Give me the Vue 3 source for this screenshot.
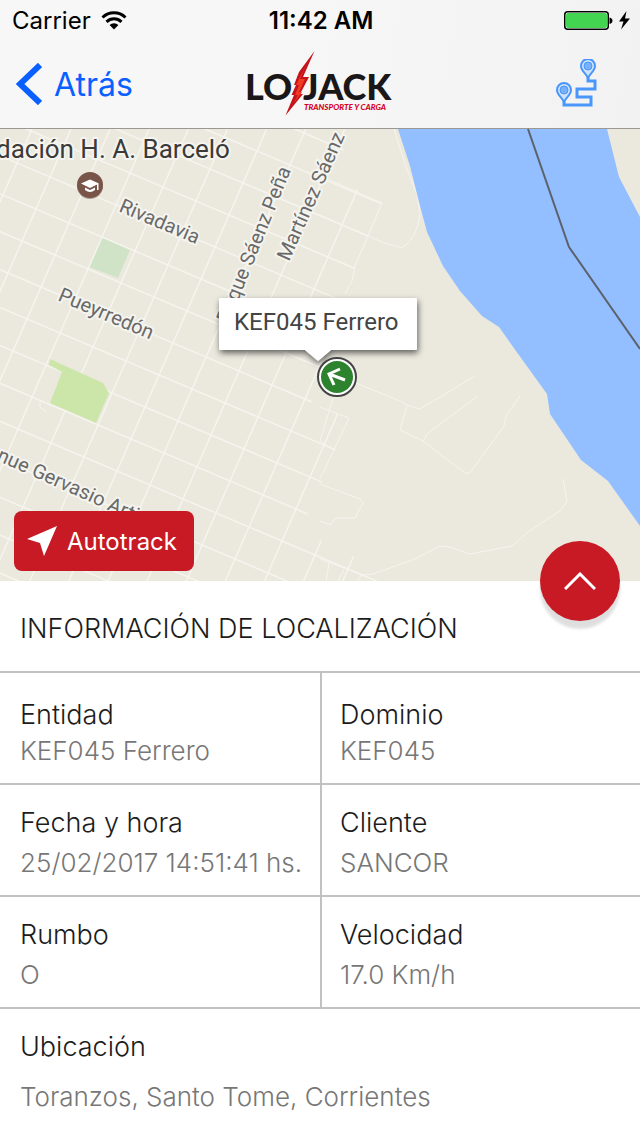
<template>
  <div class="screen">
    <header class="top">
      <div class="status-bar">
        <div class="status-left">
          <span>Carrier</span>
          <svg class="wifi" viewBox="0 0 26 19" aria-hidden="true">
            <path d="M1.5 6.5a16.5 16.5 0 0 1 23 0" />
            <path d="M5.5 10.8a10.8 10.8 0 0 1 15 0" />
            <path class="dot" d="M8.6 14a6.4 6.4 0 0 1 8.8 0L13 18.5z" />
          </svg>
        </div>
        <span class="clock">11:42 AM</span>
        <div class="status-right">
          <svg class="battery" viewBox="0 0 66 20" aria-hidden="true">
            <rect x="0.75" y="1.75" width="43.5" height="17.5" rx="3" fill="#fff" stroke="#000" stroke-width="1.5" />
            <rect x="2" y="3" width="41" height="15" rx="2" fill="#43d551" />
            <path d="M45.5 7.5c4 0.500 4 6 0 6.500z" fill="#000" />
            <path d="M62.500 1L55 11.500h4.500L57 19.500l9-11h-5z" fill="#000" />
          </svg>
        </div>
      </div>

      <nav class="nav-bar">
        <button class="back" type="button">
          <svg viewBox="0 0 26 42" aria-hidden="true">
            <path d="M24 2L4 21L24 40" />
          </svg>
          <span>Atrás</span>
        </button>

        <svg class="logo" viewBox="245 50 154 70" role="img" aria-label="LoJack Transporte y Carga">
          <text class="logo-name" x="245" y="101">LO</text>
          <text class="logo-name" x="303" y="101">JACK</text>
          <path class="bolt-gap" d="M314.500 52L296 79l-3 17h2l-3 8h2l-8 13l17-21h-2l6-15h-4z" />
          <path class="bolt" d="M314.500 52L299 73l-5 13h2l-4.500 10h2.500l-8.500 20.500L303 95h-3l9-17h-6z" />
          <path class="bolt-light" d="M307 64L301 76l-5 10h3l-4 10h3l-5 9l9-12h-3l6-13h-5z" />
          <text class="logo-tag" x="304" y="111">TRANSPORTE Y CARGA</text>
        </svg>

        <button class="route" type="button" aria-label="Recorrido">
          <svg viewBox="556 59 44 50" aria-hidden="true">
            <path class="route-line" d="M588 77v4h7v8h-18v8h14v8h-27v-4" />
            <g v-for="pin in routePins" :key="pin.x" :transform="`translate(${pin.x} ${pin.y})`">
              <path class="pin" d="M0 12C-2 7-7 5-7 0a7 7 0 0 1 14 0C7 5 2 7 0 12z" />
              <circle class="pin-dot" r="4" />
            </g>
          </svg>
        </button>
      </nav>
    </header>

    <main class="content">
      <section class="map">
        <svg class="map-canvas" viewBox="0 0 640 452" preserveAspectRatio="xMidYMid slice">
          <defs>
            <clipPath id="town">
              <path d="M0 0H348L338 50L382 74L355 137L350 165L335 240L310 275L350 290L300 402L380 440V452H0z" />
            </clipPath>
            <filter id="callout-shadow" x="-10%" y="-20%" width="120%" height="150%">
              <feDropShadow dx="1" dy="3" stdDeviation="3" flood-color="#000" flood-opacity="0.6" />
            </filter>
          </defs>

          <path class="park-pale" d="M101 108L130 121L118 149L89 138z" />

          <g clip-path="url(#town)">
            <path v-for="(d, idx) in streets" :key="idx" class="street" :d="d" />
          </g>
          <path v-for="(d, idx) in lanes" :key="`lane-${idx}`" class="lane" :d="d" />

          <path class="park" d="M50 230L103 254L109 264L96 294L50 274L62 243L49 236z" />

          <path class="water" d="M398 0L410 37L419 73L427 103L443 137L460 162L482 187L499 198L516 222L547 265L550 285L581 331L608 352L640 397V88L619 48L607 0z" />
          <path class="border-line" d="M528 0L569 118L640 220" />

          <text class="place" x="-4" y="29">dación H. A. Barceló</text>
          <text
            v-for="label in labels"
            :key="label.text"
            class="label"
            :transform="`translate(${label.x} ${label.y}) rotate(${label.angle})`"
            :text-anchor="label.anchor"
          >{{ label.text }}</text>

          <!-- university marker -->
          <circle cx="90" cy="57" r="13" fill="#6d5049" opacity="0.5" />
          <circle cx="90" cy="56" r="13" fill="#795549" />
          <path d="M81 54.500L90 50.500L99 54.500L90 59zM85 58.500L90 61L95 58.500V61Q90 65 85 61zM97 55h1.500v6H97z" fill="#fff" />

          <!-- vehicle -->
          <path class="callout" filter="url(#callout-shadow)" d="M220 169H416Q417 169 417 170V220Q417 221 416 221H331L318 232L305 221H220Q219 221 219 220V170Q219 169 220 169z" />
          <text class="callout-text" x="234" y="201">KEF045 Ferrero</text>
          <circle cx="337" cy="248" r="19" fill="#fff" stroke="#444" stroke-width="2" />
          <circle cx="337" cy="248" r="16" fill="#2d832d" />
          <path class="heading" d="M345 251L329 245M340 240L329 245L334 256" />
        </svg>

        <button class="autotrack" type="button">
          <svg viewBox="0 0 30 30" aria-hidden="true">
            <path d="M30 0L17 30L13 17L0 13z" />
          </svg>
          <span>Autotrack</span>
        </button>
      </section>

      <section class="panel">
        <button class="toggle" type="button" aria-label="Ver más">
          <svg viewBox="0 0 32 18" aria-hidden="true">
            <path d="M1 17L16 2L31 17" />
          </svg>
        </button>

        <h1 class="panel-title">INFORMACIÓN DE LOCALIZACIÓN</h1>

        <dl class="info">
          <div v-for="item in info" :key="item.label" class="cell" :class="item.kind">
            <dt>{{ item.label }}</dt>
            <dd>{{ item.value }}</dd>
          </div>
        </dl>
      </section>
    </main>
  </div>
</template>

<script setup>
const info = [
  { label: 'Entidad', value: 'KEF045 Ferrero', kind: 'tight' },
  { label: 'Dominio', value: 'KEF045', kind: 'tight' },
  { label: 'Fecha y hora', value: '25/02/2017 14:51:41 hs.' },
  { label: 'Cliente', value: 'SANCOR' },
  { label: 'Rumbo', value: 'O' },
  { label: 'Velocidad', value: '17.0 Km/h' },
  { label: 'Ubicación', value: 'Toranzos, Santo Tome, Corrientes', kind: 'wide' }
]

const routePins = [
  { x: 588, y: 66 },
  { x: 564, y: 90 }
]

const labels = [
  { text: 'Rivadavia', x: 118, y: 82, angle: 23 },
  { text: 'Pueyrredón', x: 57, y: 171, angle: 23 },
  { text: 'Roque Sáenz Peña', x: 291, y: 41, angle: -68, anchor: 'end' },
  { text: 'Martínez Sáenz', x: 289, y: 133, angle: -66 },
  { text: 'nue Gervasio Artigas', x: -4, y: 331, angle: 24 }
]

// Town grid: one block is (33, 14) along a street and (-14, 32) across it
const origin = { x: 131, y: 310 }
const along = { x: 33, y: 14 }
const across = { x: -14, y: 32 }

const line = (x, y, dir, reach) =>
  `M${x - dir.x * reach} ${y - dir.y * reach}L${x + dir.x * reach} ${y + dir.y * reach}`

const streets = []
for (let i = -14; i <= 14; i++) {
  streets.push(line(origin.x + across.x * i, origin.y + across.y * i, along, 20))
  streets.push(line(origin.x + along.x * i, origin.y + along.y * i, across, 20))
}

// Loose roads outside the grid
const lanes = [
  'M394 0L405 35L417 65L420 85Q417 110 402 119L382 113L320 86',
  'M328 50L382 74L355 137L352 152L345 165',
  'M356 254L402 273L407 276L420 280L475 247',
  'M407 276L400 301L423 312L465 344L470 344L504 297L506 287L520 267',
  'M423 312L428 304L478 267',
  'M320 355L360 370L363 374L355 389H335L331 396L320 392',
  'M320 430L363 446L373 445L415 430L440 417L450 418L470 425L512 417L528 403L560 382L567 372L563 350',
  'M329 434L326 452M344 440L338 452M361 446L358 452',
  'M320 278L349 289L320 350M333 269L320 312L333 321',
  'M40 273V278L46 283'
]
</script>

<style>
body {
  margin: 0;
  background: #fff;
}
</style>

<style scoped>
.screen {
  display: flex;
  flex-direction: column;
  min-height: 100vh;
  font-family: Inter, 'Liberation Sans', sans-serif;
  color: #1c1c1c;
}

button {
  border: 0;
  padding: 0;
  background: none;
  font: inherit;
  cursor: pointer;
}

.top {
  background: linear-gradient(100deg, #f7f7f7 40%, #f2f2f2);
  border-bottom: 1px solid #9b9893;
}

.status-bar {
  display: grid;
  grid-template-columns: 1fr auto 1fr;
  align-items: center;
  height: 40px;
  padding: 0 10px 0 12px;
  font-size: 24px;
  color: #000;
}

.status-left {
  display: flex;
  align-items: center;
  gap: 10px;
}

.status-right {
  display: flex;
  justify-content: flex-end;
}

.wifi {
  width: 26px;
  height: 19px;
  fill: none;
  stroke: #000;
  stroke-width: 3;
}

.wifi .dot {
  fill: #000;
  stroke: none;
}

.clock {
  font-weight: 600;
}

.battery {
  width: 66px;
  height: 20px;
}

.nav-bar {
  display: grid;
  grid-template-columns: 1fr auto 1fr;
  align-items: center;
  height: 88px;
  padding: 0 40px 0 16px;
}

.back {
  display: flex;
  align-items: center;
  justify-self: start;
  gap: 12px;
  font-size: 32px;
  color: #0a60ff;
}

.back svg {
  width: 26px;
  height: 42px;
  fill: none;
  stroke: #0a60ff;
  stroke-width: 6;
}

.logo {
  width: 154px;
  height: 70px;
  margin-left: 28px;
}

.logo-name {
  font-family: Lato, sans-serif;
  font-size: 36px;
  font-weight: 900;
  fill: #1a1718;
}

.logo-tag {
  font-family: Lato, sans-serif;
  font-size: 8px;
  font-style: italic;
  font-weight: 900;
  fill: #d4001f;
}

.bolt-gap {
  fill: #f6f6f6;
  stroke: #f6f6f6;
  stroke-width: 2;
}

.bolt {
  fill: #c4131b;
}

.bolt-light {
  fill: #f23a22;
}

.route {
  justify-self: end;
}

.route svg {
  display: block;
  width: 44px;
  height: 50px;
}

.route-line {
  fill: none;
  stroke: #4a97fb;
  stroke-width: 3;
}

.pin {
  fill: #cfe3fd;
  stroke: #4a97fb;
  stroke-width: 2;
}

.pin-dot {
  fill: #77b0fb;
  stroke: #4a97fb;
}

.content {
  display: flex;
  flex: 1;
  flex-direction: column;
}

.map {
  position: relative;
  flex: 1;
  min-height: 320px;
  overflow: hidden;
  background: #ebe9de;
}

.map-canvas {
  position: absolute;
  inset: 0;
  width: 100%;
  height: 100%;
}

.street {
  fill: none;
  stroke: #f5f4ee;
  stroke-width: 1.5;
}

.lane {
  fill: none;
  stroke: #f5f4ef;
  stroke-width: 1;
}

.park {
  fill: #cce6a9;
}

.park-pale {
  fill: #d0e3c6;
}

.water {
  fill: #93beff;
}

.border-line {
  fill: none;
  stroke: #5c626b;
  stroke-width: 2;
}

.place,
.label {
  font-family: Roboto, sans-serif;
  paint-order: stroke;
  stroke: #f5f4ef;
  stroke-width: 4;
  stroke-linejoin: round;
}

.place {
  font-size: 26px;
  fill: #3a3a3a;
}

.label {
  font-size: 20px;
  fill: #696969;
}

.callout {
  fill: #fff;
}

.callout-text {
  font-family: Roboto, sans-serif;
  font-size: 24px;
  fill: #444;
}

.heading {
  fill: none;
  stroke: #fff;
  stroke-width: 3;
}

.autotrack {
  position: absolute;
  left: 14px;
  bottom: 10px;
  display: flex;
  align-items: center;
  gap: 10px;
  width: 180px;
  height: 60px;
  padding-left: 13px;
  border-radius: 8px;
  background: #c81a24;
  font-size: 24px;
  color: #fff;
}

.autotrack svg {
  width: 30px;
  height: 30px;
  fill: #fff;
}

.panel {
  position: relative;
  background: #fff;
}

.toggle {
  position: absolute;
  top: -40px;
  right: 20px;
  display: flex;
  align-items: center;
  justify-content: center;
  width: 80px;
  height: 80px;
  border-radius: 50%;
  background: #c81a24;
  box-shadow: 0 8px 3px rgba(0, 0, 0, 0.13);
}

.toggle svg {
  width: 32px;
  height: 18px;
  fill: none;
  stroke: #fff;
  stroke-width: 3;
}

.panel-title {
  margin: 0;
  padding: 30px 20px 24px;
  font-size: 27px;
  font-weight: 300;
  line-height: 36px;
}

.info {
  display: grid;
  grid-template-columns: 1fr 1fr;
  margin: 0;
}

.cell {
  box-sizing: border-box;
  min-height: 112px;
  padding: 20px 8px 0 20px;
  border-top: 2px solid #c1c1c1;
}

.cell:nth-child(even) {
  padding-left: 18px;
  border-left: 2px solid #c1c1c1;
}

.cell dt {
  margin-bottom: 4px;
  font-size: 27px;
  font-weight: 300;
  line-height: 36px;
}

.cell dd {
  margin: 0;
  font-size: 26px;
  font-weight: 300;
  line-height: 36px;
  color: #777;
}

.cell.tight {
  padding-top: 24px;
}

.cell.tight dt {
  margin-bottom: 0;
}

.cell.wide {
  grid-column: 1 / -1;
  padding-bottom: 21px;
}

.cell.wide dt {
  margin-bottom: 14px;
}
</style>
